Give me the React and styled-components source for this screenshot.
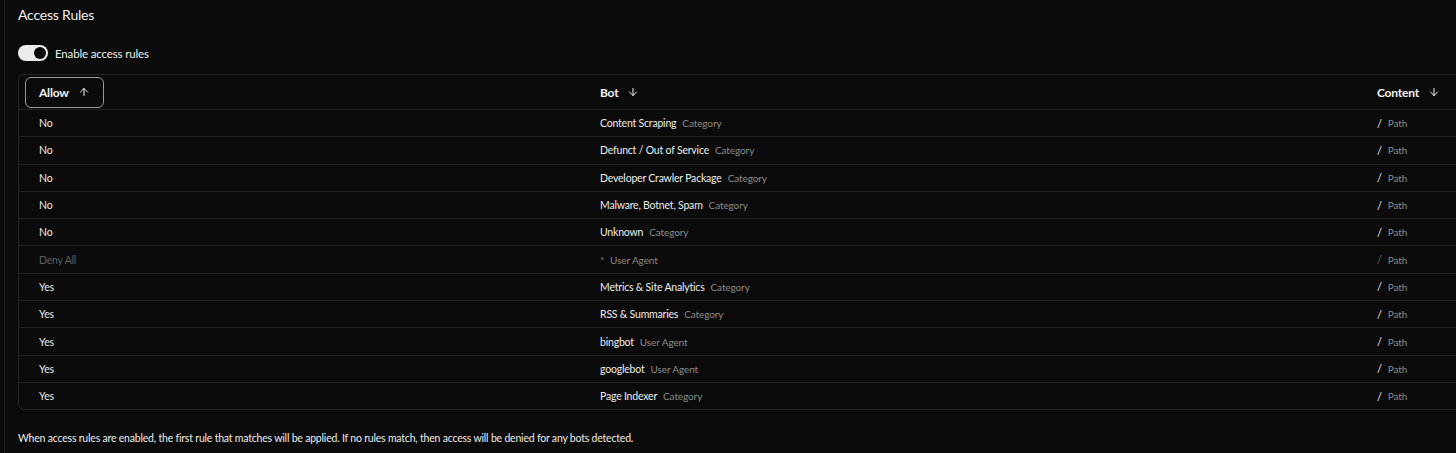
import React from "react";
import styled, { createGlobalStyle } from "styled-components";
import { ArrowUp, ArrowDown } from "lucide-react";

const Global = createGlobalStyle`
  html, body { margin: 0; padding: 0; background: #0b0b0b; overflow: hidden; }
  body { font-family: "Lato", "Noto Sans", sans-serif; color: #ececec; }
`;

const Page = styled.div`
  width: 1456px;
  height: 453px;
  box-sizing: border-box;
  padding-left: 4px;
  background: #0b0b0b;
`;

const Main = styled.main`
  height: 100%;
  box-sizing: border-box;
  border-left: 1px solid #1f1f1f;
  padding: 5px 0 0 13px;
  display: flex;
  flex-direction: column;
`;

const Title = styled.h2`
  margin: 0;
  font-size: 14px;
  font-weight: 400;
  letter-spacing: -0.2px;
  line-height: 20px;
  color: #f0f0f0;
`;

const ToggleRow = styled.label`
  display: flex;
  align-items: center;
  gap: 7px;
  margin-top: 20px;
  font-size: 11.5px;
  letter-spacing: -0.15px;
  color: #ededed;
  height: 16px;
`;

const Track = styled.span`
  width: 30px;
  height: 16px;
  border-radius: 8px;
  background: #ececec;
  display: flex;
  align-items: center;
  justify-content: ${(p) => (p.$on ? "flex-end" : "flex-start")};
  padding: 0 2px;
  box-sizing: border-box;
`;

const Knob = styled.span`
  width: 12px;
  height: 12px;
  border-radius: 50%;
  background: #0b0b0b;
`;

const Table = styled.div`
  margin-top: 13px;
  width: 1480px;
  border: 1px solid #232323;
  border-radius: 6px;
  overflow: hidden;
`;

const Row = styled.div`
  display: grid;
  grid-template-columns: 561px 777px 1fr;
  height: ${(p) => (p.$head ? "34px" : "27.3px")};
  border-top: ${(p) => (p.$first ? "none" : "1px solid #232323")};
  box-sizing: border-box;
  align-items: center;
`;

const Cell = styled.div`
  padding-left: 20px;
  display: flex;
  align-items: center;
  gap: 6px;
  font-size: 10.5px;
  letter-spacing: -0.2px;
  white-space: nowrap;
  color: ${(p) => (p.$muted ? "#5f5f5f" : "#ececec")};
`;

const HeadCell = styled.div`
  display: flex;
  align-items: center;
  padding-left: ${(p) => (p.$focus ? "6px" : "20px")};
`;

const SortButton = styled.button`
  display: flex;
  align-items: center;
  gap: 9px;
  background: transparent;
  color: #f4f4f4;
  font-family: inherit;
  font-size: 12px;
  font-weight: 700;
  letter-spacing: -0.2px;
  padding: 0 ${(p) => (p.$focus ? "13px" : "0")};
  height: 31px;
  border: ${(p) => (p.$focus ? "1px solid #9a9a9a" : "0 solid transparent")};
  border-radius: 6px;
  cursor: pointer;
`;

const Sub = styled.span`
  color: ${(p) => (p.$muted ? "#555" : "#8a8a8a")};
  font-size: 10px;
  letter-spacing: -0.1px;
`;

const Star = styled.span`
  color: #888;
  font-size: 10px;
`;

const Slash = styled.span`
  color: ${(p) => (p.$muted ? "#5f5f5f" : "#ececec")};
  font-size: 11px;
`;

const Footer = styled.p`
  margin: 22px 0 0;
  font-size: 10.5px;
  letter-spacing: -0.2px;
  color: #ececec;
`;

const rules = [
  { allow: "No", bot: "Content Scraping", type: "Category" },
  { allow: "No", bot: "Defunct / Out of Service", type: "Category" },
  { allow: "No", bot: "Developer Crawler Package", type: "Category" },
  { allow: "No", bot: "Malware, Botnet, Spam", type: "Category" },
  { allow: "No", bot: "Unknown", type: "Category" },
  { allow: "Deny All", bot: "*", type: "User Agent", muted: true },
  { allow: "Yes", bot: "Metrics & Site Analytics", type: "Category" },
  { allow: "Yes", bot: "RSS & Summaries", type: "Category" },
  { allow: "Yes", bot: "bingbot", type: "User Agent" },
  { allow: "Yes", bot: "googlebot", type: "User Agent" },
  { allow: "Yes", bot: "Page Indexer", type: "Category" },
];

export default function App() {
  return (
    <>
      <Global />
      <Page>
        <Main>
          <Title>Access Rules</Title>
          <ToggleRow>
            <Track $on>
              <Knob />
            </Track>
            Enable access rules
          </ToggleRow>
          <Table>
            <Row $head $first>
              <HeadCell $focus>
                <SortButton $focus>
                  Allow <ArrowUp size={12} strokeWidth={2} />
                </SortButton>
              </HeadCell>
              <HeadCell>
                <SortButton>
                  Bot <ArrowDown size={12} strokeWidth={2} />
                </SortButton>
              </HeadCell>
              <HeadCell>
                <SortButton>
                  Content <ArrowDown size={12} strokeWidth={2} />
                </SortButton>
              </HeadCell>
            </Row>
            {rules.map((r, i) => (
              <Row key={i}>
                <Cell $muted={r.muted}>{r.allow}</Cell>
                <Cell>
                  {r.muted ? <Star>*</Star> : r.bot}
                  <Sub>{r.type}</Sub>
                </Cell>
                <Cell>
                  <Slash $muted={r.muted}>/</Slash>
                  <Sub>Path</Sub>
                </Cell>
              </Row>
            ))}
          </Table>
          <Footer>
            When access rules are enabled, the first rule that matches will be applied. If no rules match, then access will be denied for any bots detected.
          </Footer>
        </Main>
      </Page>
    </>
  );
}
